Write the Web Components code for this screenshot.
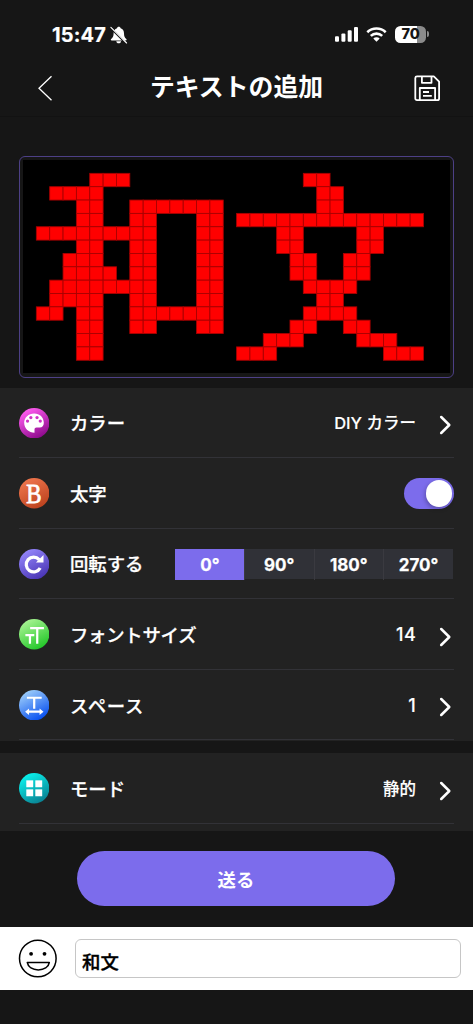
<!DOCTYPE html>
<html lang="ja">
<head>
<meta charset="utf-8">
<title>テキストの追加</title>
<style>
html,body{margin:0;padding:0;background:#161616}
body{width:473px;height:1024px;overflow:hidden;font-family:Inter,"Noto Sans CJK JP",sans-serif;color:#fff}
</style>
</head>
<body>
<text-editor-screen></text-editor-screen>
<script>
const define=(name,html,setup)=>customElements.define(name,class extends HTMLElement{
  connectedCallback(){
    if(this.shadowRoot)return;
    const root=this.attachShadow({mode:'open'});
    const t=document.createElement('template');
    t.innerHTML=html;
    root.append(t.content.cloneNode(true));
    if(setup)setup(this,root);
  }
});

define('status-bar',`<style>
:host{display:flex;height:60px;box-sizing:border-box;padding:24px 44px 0 52px;align-items:flex-start}
.time{width:54px;font:700 20px/22px Inter;letter-spacing:.15px;-webkit-text-stroke:.2px #fff}
svg{display:block;flex:none}
.bell{margin:2px 0 0 3.500px}
.right{margin-left:auto;display:flex;align-items:flex-start}
.bat{display:flex;width:31px;height:16.500px;margin:2px 0 0 8px;border-radius:5.500px;background:linear-gradient(90deg,#fff 71%,#8b8b8b 71%);align-items:center;justify-content:center;color:#161616;font:800 14.500px/16px Inter;letter-spacing:-.2px}
.tip{width:2px;height:6px;margin:7px 0 0 1px;border-radius:0 2px 2px 0;background:#8b8b8b}
</style>
<span class="time">15:47</span>
<svg class="bell" width="18" height="18" viewBox="0 0 18 18"><path fill="#fff" d="M8.8.8c-1 0-1.600.6-1.800 1.400C4.800 3 3.600 4.800 3.600 7.200c0 3.300-.8 4.300-2.500 5.900-.6.700-.3 1.300.6 1.300h14c1 0 1.200-.7.600-1.300-1.600-1.600-2.300-2.600-2.300-5.900 0-2.500-1.200-4.300-3.400-5C10.400 1.400 9.800.8 8.800.8zM6.300 15.200c.2 1.300 1.100 2.100 2.400 2.100s2.200-.8 2.400-2.100z"/><path d="M1 2.300 15.500 16.800" stroke="#161616" stroke-width="2"/><path d="M.9 1.300 16.600 17" stroke="#fff" stroke-width="1.100" stroke-linecap="round"/></svg>
<div class="right">
<svg width="24" height="20" viewBox="0 0 24 20" style="margin-right:8px"><g fill="#fff"><rect x="1" y="12.200" width="4" height="5.600" rx="1.100"/><rect x="7.400" y="9.500" width="4" height="8.300" rx="1.100"/><rect x="13.700" y="6.300" width="4" height="11.500" rx="1.100"/><rect x="20" y="3" width="4" height="14.800" rx="1.100"/></g></svg>
<svg width="21" height="20" viewBox="0 0 21 20"><g fill="none" stroke="#fff" stroke-width="2.600"><path d="M1.300 8.200a13.300 13.300 0 0 1 18.400 0"/><path d="M4.800 11.900a8.300 8.300 0 0 1 11.400 0"/></g><path fill="#fff" d="M7.300 14.500a4.600 4.600 0 0 1 6.400 0l-3.200 3.300z"/></svg>
<div class="bat">70</div><i class="tip"></i>
</div>`);

define('nav-bar',`<style>
:host{display:flex;height:57px;box-sizing:border-box;padding:0 32px 0 38px;align-items:flex-start;justify-content:space-between;border-bottom:1px solid #121212}
h1{margin:9px 0 0 5px;font:700 24.850px/36px Inter,"Noto Sans CJK JP",sans-serif;white-space:nowrap}
svg{display:block}
</style>
<svg width="16" height="28" viewBox="0 0 16 28" style="margin-top:14px"><path d="M13.500 2.300 1 14.300l12.500 12" fill="none" stroke="#fff" stroke-width="1.300"/></svg>
<h1><slot></slot></h1>
<svg width="27" height="27" viewBox="0 0 27 27" style="margin-top:15px"><g fill="none" stroke="#fff" stroke-width="1.800" stroke-linejoin="round"><path d="M3 1.400h16.800l5.300 5.300V23.500a1.700 1.700 0 0 1-1.700 1.700H3a1.700 1.700 0 0 1-1.700-1.700V3A1.700 1.700 0 0 1 3 1.400z"/><path d="M7.900 1.600v6.200h9.600V1.600M5.800 25v-12h15.300v12"/><path d="M9 17h6M9 20.800h8.800"/></g></svg>`);

define('led-panel',`<style>
:host{display:block;box-sizing:border-box;margin:39px 19px 10px;height:221.500px;border:1px solid #4d4086;border-radius:6px;padding:2.700px 2.900px}
svg{display:block;width:427.200px;height:213.600px;background:#000}
</style><svg viewBox="0 0 32 16"></svg>`,(el,root)=>{
  const rows=[
    [],
    [[5,7],[21,22]],
    [[2,5],[22,23]],
    [[4,5],[8,14],[22,23]],
    [[4,5],[8,9],[13,14],[16,29]],
    [[1,9],[13,14],[19,20],[25,26]],
    [[4,5],[8,9],[13,14],[19,20],[25,26]],
    [[3,5],[8,9],[13,14],[20,21],[24,25]],
    [[3,6],[8,9],[13,14],[20,21],[24,25]],
    [[2,9],[13,14],[21,24]],
    [[2,5],[8,9],[13,14],[22,23]],
    [[1,2],[4,5],[8,14],[21,24]],
    [[4,5],[8,9],[13,14],[20,21],[24,25]],
    [[4,5],[18,20],[25,27]],
    [[4,5],[16,18],[27,29]]
  ];
  let s='';
  rows.forEach((r,y)=>r.forEach(([a,b])=>{for(let x=a;x<=b;x++)s+=`<rect x="${x}" y="${y}" width="1" height="1"/>`}));
  root.querySelector('svg').innerHTML=`<g fill="#f00" stroke="#a80000" stroke-width=".065">${s}</g>`;
});

define('setting-card',`<style>:host{display:block;background:#222;overflow:hidden;padding:0 19px}</style><slot></slot>`);

define('chevron-right',`<style>:host{display:block}svg{display:block}</style><svg width="13" height="20" viewBox="0 0 13 20"><path d="M2.200 2 10.300 10l-8.100 8" fill="none" stroke="#fff" stroke-width="2.500" stroke-linecap="round" stroke-linejoin="round"/></svg>`);

define('setting-row',`<style>
:host{display:flex;height:70.600px;box-sizing:border-box;border-bottom:1px solid #323237;align-items:center}
.label{margin:2px 0 0 20.500px;font-size:18.400px;line-height:28px;font-weight:500;white-space:nowrap;letter-spacing:var(--tracking,0);-webkit-text-stroke:.25px #fff}
.value{margin-left:auto;display:flex;align-items:center;font-size:16.500px;line-height:24px;font-weight:500;white-space:nowrap;-webkit-text-stroke:.15px #fff}
:host([number]) .value{font-size:18px;letter-spacing:.3px}
:host([more]) .value{padding-top:2px}
chevron-right{margin:3px 2px 0 23px}
</style>
<slot name="icon"></slot><span class="label"><slot name="label"></slot></span>
<div class="value"><slot></slot></div>`,(el,root)=>{
  if(el.hasAttribute('more'))root.querySelector('.value').append(document.createElement('chevron-right'));
});

const glyphs={
  color:['#ff5cf0','#8d0a8c','<path fill="#fff" d="M15 5.300c-5.500 0-9.900 4-9.900 9.200 0 5.600 4.700 9.900 10.200 9.900v-2.900c0-1.500.7-2.200 2-2.200h3.200c2.400 0 4-2 4-4.700C24.500 9 20.400 5.300 15 5.300z"/><g fill="#cf31c6"><circle cx="11.700" cy="9.400" r="1.600"/><circle cx="17.800" cy="9.400" r="1.600"/><circle cx="8.400" cy="12.900" r="1.600"/><circle cx="21" cy="12.900" r="1.600"/></g>'],
  bold:['#ee754c','#bd431f','<text transform="translate(14.800 24.200) scale(.82 1)" text-anchor="middle" font-family="Liberation Serif,serif" font-size="27.500" fill="#fff" stroke="#fff" stroke-width=".8">B</text>'],
  rotate:['#9385fa','#4934b4','<path d="M20.900 18.700a7.300 7.300 0 1 1-1-8.300" fill="none" stroke="#fff" stroke-width="3.200"/><path fill="#fff" d="M24.200 5.800v7.400h-7.500z"/>'],
  size:['#a6f391','#22c728','<g fill="none" stroke="#fff" stroke-width="2.200"><path d="M11 9h13.600M18 9v15.400M6.300 15.900h8.800M10.800 16v8.400"/></g>'],
  space:['#9acbfa','#074ff0','<g fill="none" stroke="#fff"><path stroke-width="2.200" d="M7.800 7.600h14.600M15 7.600v10.800M8.500 21.400h13"/></g><path fill="#fff" d="m6 21.400 3.900-3.200v6.400zM24.200 21.400l-3.900-3.200v6.400z"/>'],
  mode:['#09f1ec','#0a8192','<g fill="#fff"><rect x="7.200" y="7.200" width="6.800" height="6.800"/><rect x="16.100" y="7.200" width="6.800" height="6.800"/><rect x="7.200" y="16.100" width="6.800" height="6.800"/><rect x="16.100" y="16.100" width="6.800" height="6.800"/></g>']
};
define('round-icon',`<style>:host{display:block;width:30.400px;height:30.500px;margin-top:1px;flex:none}svg{display:block;width:100%;height:100%}</style><svg viewBox="0 0 30 30"></svg>`,(el,root)=>{
  const [a,b,g]=glyphs[el.getAttribute('kind')];
  root.querySelector('svg').innerHTML=`<defs><linearGradient id="g" x1=".25" y1=".05" x2=".75" y2=".95"><stop stop-color="${a}"/><stop offset="1" stop-color="${b}"/></linearGradient></defs><circle cx="15" cy="15" r="15" fill="url(#g)"/>${g}`;
});

define('toggle-switch',`<style>
:host{display:flex;box-sizing:border-box;width:50.500px;height:30.500px;margin-top:1px;padding:2px;border-radius:16px;background:#7c6cec;justify-content:flex-end}
i{width:26.500px;height:26.500px;border-radius:50%;background:#fff;box-shadow:-1px 2px 4px #0004}
</style><i></i>`);

define('angle-picker',`<style>
:host{display:grid;grid-template-columns:69px 69.500px 69.500px 70px;width:278px;height:30.500px;margin:1.500px 1px 0 0;background:#303137}
span{display:flex;align-items:center;justify-content:center;border-left:1px solid #3a3a40;box-sizing:border-box;padding-top:1px;font:700 17px/30px Inter;-webkit-text-stroke:.25px #fff}
span:first-of-type{background:#7c6cec;border-color:#7c6cec}
</style><span>0°</span><span>90°</span><span>180°</span><span>270°</span>`);

define('send-button',`<style>
:host{display:flex;width:318px;height:55px;box-sizing:border-box;margin:20px 0 20.500px 77px;border-radius:27.500px;background:#7c6cec;align-items:center;justify-content:center;font-size:18.400px;font-weight:700}
</style><slot></slot>`);

define('message-bar',`<style>
:host{display:flex;height:63.500px;box-sizing:border-box;padding:12px 12px 0 18px;background:#fff;color:#000}
svg{display:block;flex:none}
.field{flex:1;box-sizing:border-box;height:39px;margin-left:18px;border:1px solid #c6c6c6;border-radius:6px;padding:9px 6px 0;font-size:18.400px;line-height:27px;font-weight:500;-webkit-text-stroke:.35px #000}
</style>
<svg width="39" height="39" viewBox="0 0 39 39"><g fill="none" stroke="#000" stroke-width="1.500"><circle cx="19.800" cy="19.500" r="18.300"/><path stroke-linejoin="round" d="M9.300 23.500h22c-.8 4.700-5.300 7.400-11 7.400s-10.200-2.700-11-7.400z"/></g><circle cx="13.100" cy="14.800" r="1.900"/><circle cx="26.500" cy="14.800" r="1.900"/></svg>
<div class="field"><slot></slot></div>`);

define('text-editor-screen',`<style>
:host{display:flex;flex-direction:column;width:473px;height:1024px;background:#161616}
:host>*{flex:none}
.main{height:353.300px;box-sizing:border-box}
.extra{height:78px;margin-top:12.500px;box-sizing:border-box}
.tight{--tracking:-.25px}
.wide{--tracking:.7px}
</style>
<status-bar></status-bar>
<nav-bar>テキストの追加</nav-bar>
<led-panel></led-panel>
<setting-card class="main">
<setting-row more><round-icon slot="icon" kind="color"></round-icon><span slot="label">カラー</span>DIY カラー</setting-row>
<setting-row><round-icon slot="icon" kind="bold"></round-icon><span slot="label">太字</span><toggle-switch></toggle-switch></setting-row>
<setting-row><round-icon slot="icon" kind="rotate"></round-icon><span slot="label">回転する</span><angle-picker></angle-picker></setting-row>
<setting-row more number class="tight"><round-icon slot="icon" kind="size"></round-icon><span slot="label">フォントサイズ</span>14</setting-row>
<setting-row more number class="wide"><round-icon slot="icon" kind="space"></round-icon><span slot="label">スペース</span>1</setting-row>
</setting-card>
<setting-card class="extra">
<setting-row more><round-icon slot="icon" kind="mode"></round-icon><span slot="label">モード</span>静的</setting-row>
</setting-card>
<send-button>送る</send-button>
<message-bar>和文</message-bar>`);
</script>
</body>
</html>
